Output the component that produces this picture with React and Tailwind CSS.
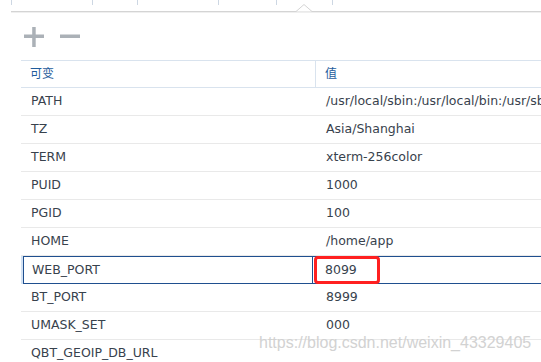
import React from "react";

const rows = [
  ["PATH", "/usr/local/sbin:/usr/local/bin:/usr/sbin:/usr/bin:/sbin:/bin"],
  ["TZ", "Asia/Shanghai"],
  ["TERM", "xterm-256color"],
  ["PUID", "1000"],
  ["PGID", "100"],
  ["HOME", "/home/app"],
  ["WEB_PORT", "8099", true],
  ["BT_PORT", "8999"],
  ["UMASK_SET", "000"],
  ["QBT_GEOIP_DB_URL", ""],
];

const tabs = [81, 45, 81, 58, 56];

export default function App() {
  return (
    <div className="relative w-[541px] h-[362px] overflow-hidden bg-white font-['DejaVu_Sans','Noto_Sans_CJK_SC',sans-serif] text-[12.5px] text-[#38424d]">
      {/* tab strip */}
      <div className="flex h-[11px] pl-[11px]">
        {tabs.map((w, i) => (
          <div key={i} className="h-[5px] border-l border-[#cdd7e3] shrink-0" style={{ width: w }} />
        ))}
        <div className="h-[5px] border-l border-[#cdd7e3] w-px shrink-0" />
      </div>
      <div className="ml-[11px] h-px bg-[#d4d4d4]" />
      <div className="ml-[11px] h-px bg-[#efefef]" />
      <svg className="absolute left-[296px] top-[4px]" width="16" height="9" viewBox="0 0 16 9">
        <polygon points="0,7.5 8,0.5 16,7.5" fill="#ffffff" />
        <polyline points="0,7.5 8,0.5 16,7.5" fill="none" stroke="#d4d4d4" strokeWidth="1" />
      </svg>

      {/* toolbar */}
      <div className="flex items-start gap-[16px] h-[47px] pl-[24px] pt-[14px]">
        <svg width="20" height="20" viewBox="0 0 20 20">
          <rect x="0" y="7.5" width="20" height="3.5" fill="#abb1b7" />
          <rect x="8.2" y="0" width="3.5" height="20" fill="#abb1b7" />
        </svg>
        <svg width="20" height="20" viewBox="0 0 20 20">
          <rect x="0" y="7.5" width="20" height="3.5" fill="#abb1b7" />
        </svg>
      </div>

      {/* table */}
      <div className="ml-[21px] w-[700px]">
        <div className="flex h-[28px] border-y border-[#d9e3ee] text-[12px] text-[#1f5c9c]">
          <div className="w-[295px] shrink-0 flex items-center pl-[9px] border-r border-[#d9e3ee]">可变</div>
          <div className="flex-1 flex items-center pl-[9px]">值</div>
        </div>
        {rows.map(([k, v, sel]) =>
          sel ? (
            <div key={k} className="flex h-[28px]">
              <div className="w-[2px] shrink-0 bg-[#d3e2f3]" />
              <div className="flex flex-1 border-y border-l border-[#1f4f8f]">
                <div className="w-[289px] shrink-0 flex items-center pl-[8px] border-r border-[#1f4f8f]">{k}</div>
                <div className="flex-1 flex items-center pl-[3px]">
                  <div className="h-full flex items-center border-l border-[#6d8fbd] pl-[8px]">{v}</div>
                </div>
              </div>
            </div>
          ) : (
            <div key={k} className="flex h-[28px] border-b border-[#e9e9e9]">
              <div className="w-[295px] shrink-0 flex items-center pl-[10px]">{k}</div>
              <div className="flex-1 flex items-center pl-[10px] whitespace-nowrap">{v}</div>
            </div>
          )
        )}
      </div>

      {/* annotation */}
      <div className="absolute left-[314px] top-[256px] w-[66px] h-[28px] border-[3px] border-[#ff2020] rounded-[4px]" />

      {/* watermark */}
      <div className="absolute left-[259px] top-[335px] leading-none text-[16px] font-['Liberation_Sans',sans-serif] text-[#d2d2d2] whitespace-nowrap">
        https://blog.csdn.net/weixin_43329405
      </div>
    </div>
  );
}
